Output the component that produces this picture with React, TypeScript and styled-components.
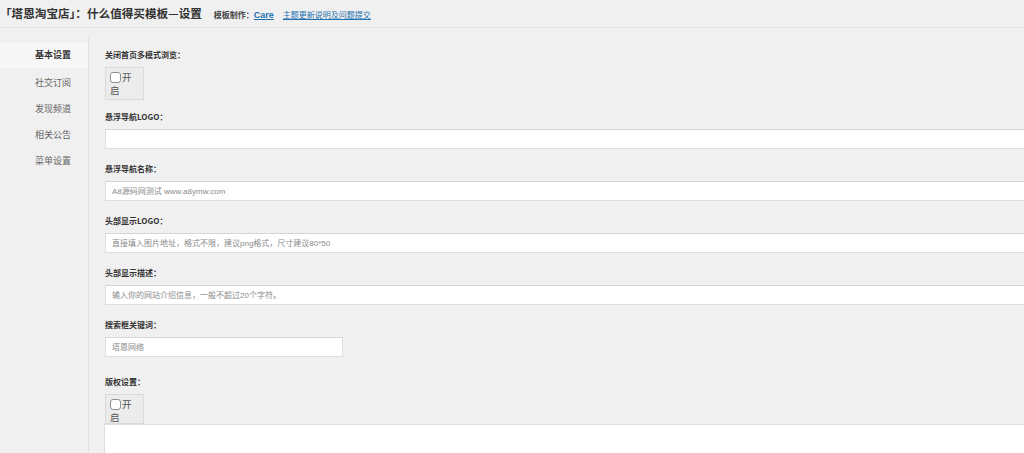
import React from "react";
import styled, { createGlobalStyle } from "styled-components";

const Global = createGlobalStyle`
  html, body { margin: 0; padding: 0; background: #f0f0f0; overflow: hidden; }
  body { font-family: "Liberation Sans", "Noto Sans CJK SC", sans-serif; color: #333; }
  * { box-sizing: border-box; }
`;

const Page = styled.div`
  width: 1024px;
  height: 453px;
  overflow: hidden;
  background: #f0f0f0;
`;

const Header = styled.div`
  height: 28px;
  display: flex;
  align-items: center;
  gap: 12px;
  border-bottom: 1px solid #e4e4e4;
`;

const Title = styled.h1`
  margin: 0;
  font-size: 11.6px;
  font-weight: 700;
  color: #333;
  font-family: "Noto Sans CJK SC", sans-serif;
  line-height: 27px;
`;

const Meta = styled.div`
  display: flex;
  align-items: center;
  gap: 9px;
  font-size: 8px;
  font-weight: 700;
  color: #444;
  font-family: "Noto Sans CJK SC", sans-serif;
  padding-top: 1px;
`;

const Link = styled.a<{ $bold?: boolean }>`
  color: #2271b1;
  text-decoration: underline;
  font-weight: ${(p) => (p.$bold ? 700 : 400)};
  font-family: "Liberation Sans", "Noto Sans CJK SC", sans-serif;
  font-size: ${(p) => (p.$bold ? "9px" : "8px")};
`;

const Body = styled.div`
  display: flex;
  margin-top: 9px;
  height: 416px;
`;

const Sidebar = styled.nav`
  width: 89px;
  flex-shrink: 0;
  border-right: 1px solid #e2e2e2;
  padding-top: 6px;
  display: flex;
  flex-direction: column;
`;

const NavItem = styled.div<{ $active?: boolean }>`
  height: ${(p) => (p.$active ? 25 : 26)}px;
  line-height: 24px;
  margin-bottom: ${(p) => (p.$active ? 3 : 0)}px;
  text-align: right;
  padding-right: 17px;
  font-size: 9px;
  font-family: "Noto Sans CJK SC", sans-serif;
  color: ${(p) => (p.$active ? "#333" : "#666")};
  font-weight: ${(p) => (p.$active ? 700 : 400)};
  background: ${(p) => (p.$active ? "#f7f7f7" : "transparent")};
`;

const Content = styled.div`
  flex: 1;
  padding: 12px 0 0 16px;
  min-width: 0;
`;

const Field = styled.div<{ $mb?: number }>`
  margin-bottom: ${(p) => (p.$mb ?? 14)}px;
`;

const Label = styled.div`
  font-size: 8px;
  font-weight: 700;
  color: #333;
  line-height: 12px;
  font-family: "Noto Sans CJK SC", sans-serif;
  margin-bottom: 6px;
`;

const Input = styled.input<{ $w?: number }>`
  display: block;
  width: ${(p) => (p.$w ? `${p.$w}px` : "940px")};
  height: 20px;
  border: 1px solid #dedede;
  border-top-color: #d6d6d6;
  background: #fff;
  padding: 0 6px;
  font-size: 8px;
  font-family: "Liberation Sans", "Noto Sans CJK SC", sans-serif;
  color: #333;
  outline: none;
  &::placeholder { color: #8a8a8a; }
`;

const CheckBox = styled.label<{ $h?: number }>`
  display: block;
  width: 39px;
  height: ${(p) => p.$h ?? 33}px;
  border: 1px solid #dadada;
  background: #ececec;
  padding: 3px 4px 0 4px;
  font-size: 9.5px;
  line-height: 13px;
  color: #555;
  font-family: "Noto Sans CJK SC", sans-serif;
`;

const Tick = styled.span`
  display: inline-block;
  width: 11px;
  height: 11px;
  border: 1px solid #8c8f94;
  border-radius: 3px;
  background: #fff;
  vertical-align: -2px;
  margin-right: 1px;
`;

const TextArea = styled.textarea`
  display: block;
  width: 940px;
  height: 60px;
  border: 1px solid #dedede;
  background: #fff;
  resize: none;
  margin-left: -1px;
  outline: none;
`;

export default function App() {
  return (
    <Page>
      <Global />
      <Header>
        <Title>「塔恩淘宝店」：什么值得买模板—设置</Title>
        <Meta>
          <span>
            模板制作：<Link $bold href="#">Care</Link>
          </span>
          <Link href="#">主题更新说明及问题提交</Link>
        </Meta>
      </Header>
      <Body>
        <Sidebar>
          <NavItem $active>基本设置</NavItem>
          <NavItem>社交订阅</NavItem>
          <NavItem>发现频道</NavItem>
          <NavItem>相关公告</NavItem>
          <NavItem>菜单设置</NavItem>
        </Sidebar>
        <Content>
          <Field $mb={11}>
            <Label>关闭首页多模式浏览：</Label>
            <CheckBox>
              <Tick />开启
            </CheckBox>
          </Field>
          <Field>
            <Label>悬浮导航LOGO：</Label>
            <Input />
          </Field>
          <Field>
            <Label>悬浮导航名称：</Label>
            <Input placeholder="A8源码网测试 www.a8ymw.com" />
          </Field>
          <Field>
            <Label>头部显示LOGO：</Label>
            <Input placeholder="直接填入图片地址，格式不限，建议png格式，尺寸建议80*50" />
          </Field>
          <Field>
            <Label>头部显示描述：</Label>
            <Input placeholder="输入你的网站介绍信息，一般不超过20个字符。" />
          </Field>
          <Field $mb={19}>
            <Label>搜索框关键词：</Label>
            <Input $w={238} placeholder="塔恩网络" />
          </Field>
          <Field>
            <Label>版权设置：</Label>
            <CheckBox $h={30}>
              <Tick />开启
            </CheckBox>
            <TextArea />
          </Field>
        </Content>
      </Body>
    </Page>
  );
}
